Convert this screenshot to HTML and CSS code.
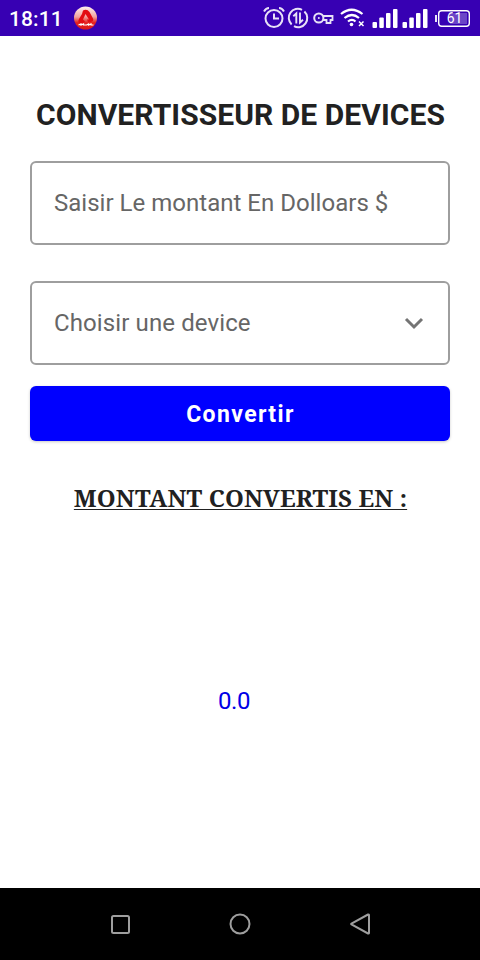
FILE: index.html
```html
<!DOCTYPE html>
<html lang="fr">
<head>
<meta charset="utf-8">
<meta name="viewport" content="width=device-width">
<title>Convertisseur de devices</title>
<link rel="stylesheet" href="styles.css">
</head>
<body>
<header class="status">
  <span class="clock">18:11</span>
  <svg class="app-icon" width="24" height="24" viewBox="0 0 24 24">
    <defs><linearGradient id="badge" x1="0" y1="0" x2="0" y2="1"><stop offset="0" stop-color="#fff0f0"/><stop offset=".45" stop-color="#f2a3a0"/><stop offset=".7" stop-color="#e52320"/><stop offset="1" stop-color="#dd1616"/></linearGradient></defs>
    <circle cx="11.500" cy="12" r="11.500" fill="url(#badge)"/>
    <path d="M9 4.500q4-2 6.500 1.500l3.500 6.500q1 3-2 3.500h-3l-1-2.500h2L11.500 8l-2.500 5.500 2 2-2 1.500H5.500q-2-1-.5-4l3-5z" fill="#e30d13"/>
    <path d="M4.500 19l2.500-1v1l2.500-1v1h3l2-1v1l2.500-1v1h2.500" fill="none" stroke="#fff" stroke-width="1.200"/>
  </svg>
  <svg class="indicators" width="215" height="36" viewBox="0 0 215 36" fill="none" stroke="#e8e1f7" stroke-width="2">
    <circle cx="14" cy="18.500" r="8.500"/>
    <path d="M4 11.500Q6 8 9 8M24 11.500Q22 8 19 8M14 13.500v5h5"/>
    <path d="M42 9.900A9 9 0 0 0 31.600 24.400M34 26.100A9 9 0 0 0 44.400 11.600"/>
    <path d="M36.300 23.500v-10l-3 2.700M40 12.500v10l3-2.700" stroke-width="1.900"/>
    <circle cx="58.800" cy="18" r="4.600"/><circle cx="58.800" cy="18" r="1" fill="#e8e1f7" stroke="none"/>
    <path d="M63 16h9.500v4h-2v3h-4v-3H63" stroke-width="1.800"/>
    <g stroke="#fff" stroke-width="2.200"><path d="M81 14q10.500-8.500 21.500 0M84.500 18q7.500-6 14.500 0M88 21.500q4-3.200 7.500 0"/><path d="M99 21.500l4.500 4.500m0-4.500L99 26" stroke-width="1.500"/></g>
    <circle cx="91.500" cy="24.500" r="1.800" fill="#fff" stroke="none"/>
    <g fill="#fff" stroke="none">
      <rect x="112.500" y="22" width="4.500" height="6" rx="1"/><rect x="119.300" y="17.500" width="4.500" height="10.500" rx="1"/><rect x="126" y="13" width="4.500" height="15" rx="1"/><rect x="133" y="9" width="4.500" height="19" rx="1"/>
      <rect x="142.500" y="22" width="4.500" height="6" rx="1"/><rect x="149.300" y="17.500" width="4.500" height="10.500" rx="1"/><rect x="156" y="13" width="4.500" height="15" rx="1"/><rect x="163" y="9" width="4.500" height="19" rx="1"/>
    </g>
    <rect x="190" y="13" width="17" height="11" fill="#6b45c7" stroke="none"/>
    <rect x="178.700" y="10.700" width="30.600" height="15.600" rx="3" stroke="#fff" stroke-width="1.400"/>
    <path d="M176 15v7" stroke="#fff" stroke-width="1.800"/>
    <text class="battery-level" x="194.500" y="23" text-anchor="middle">61</text>
  </svg>
</header>
<main class="screen">
  <h1 class="title">CONVERTISSEUR DE DEVICES</h1>
  <div class="field"><span class="label-amount">Saisir Le montant En Dolloars $</span></div>
  <div class="field"><span class="label-device">Choisir une device</span>
    <svg width="24" height="24" viewBox="0 0 24 24" fill="none" stroke="#747474" stroke-width="3"><path d="M4 8l8 8 8-8"/></svg>
  </div>
  <button class="convert">Convertir</button>
  <h2 class="subtitle">MONTANT CONVERTIS EN :</h2>
  <output class="result">0.0</output>
</main>
<nav class="nav">
  <svg width="24" height="24" viewBox="0 0 24 24"><rect x="4" y="4" width="17" height="17" rx="1.500"/></svg>
  <svg width="24" height="24" viewBox="0 0 24 24"><circle cx="12" cy="12" r="9.500"/></svg>
  <svg width="24" height="24" viewBox="0 0 24 24"><path d="M3.500 12.500q-.7-.5 0-1L20 2.500q1-.3 1 .7v17.600q0 1-1 .7z"/></svg>
</nav>
</body>
</html>
```
FILE: styles.css
```css
* { box-sizing: border-box; }
body {
  margin: 0;
  height: 960px;
  display: flex;
  flex-direction: column;
  background: #fff;
  font-family: Roboto, sans-serif;
  color: #212121;
  overflow: hidden;
}
.status {
  height: 36px;
  display: flex;
  align-items: center;
  background: #3700b3;
  color: #fff;
}
.clock {
  width: 64.5px;
  margin-left: 9px;
  font-size: 21px;
  font-weight: 500;
  letter-spacing: .1px;
  padding-top: 1px;
}
.indicators {
  width: 215px;
  flex: none;
  margin-left: auto;
  margin-right: 5px;
}
.battery-level {
  fill: #fff;
  stroke: none;
  font-size: 14px;
}
.screen {
  flex: 1;
  display: flex;
  flex-direction: column;
  padding: 0 30px;
}
.title {
  margin: 60px -31px 28px -30px;
  height: 37px;
  text-align: center;
  font-size: 30px;
  line-height: 37px;
  font-weight: 700;
  letter-spacing: .06px;
  white-space: nowrap;
}
.field {
  height: 84px;
  margin-bottom: 36px;
  padding: 0 22px;
  display: flex;
  align-items: center;
  justify-content: space-between;
  border: 2px solid #9e9e9e;
  border-radius: 6px;
  color: #666;
  font-size: 24px;
}
.label-amount { letter-spacing: .02px; }
.label-device { letter-spacing: .11px; }
.convert {
  height: 55px;
  margin-top: -15px;
  padding: 2px 0 0 1px;
  border: 0;
  border-radius: 6px;
  background: #00f;
  color: #fff;
  font: 700 23px Roboto, sans-serif;
  letter-spacing: 1.4px;
  box-shadow: 0 1px 3px rgba(0, 0, 0, .22);
}
.subtitle {
  margin: 41px -1px 0 0;
  height: 32px;
  font: 700 24px/32px "Noto Serif", "Liberation Serif", serif;
  letter-spacing: .14px;
  text-align: center;
  white-space: nowrap;
  text-decoration: underline;
  text-decoration-thickness: 1px;
  text-underline-offset: 2px;
}
.result {
  margin: 172px 0 0 188px;
  font-size: 24px;
  line-height: 30px;
  letter-spacing: -.4px;
  color: #0000e6;
}
.nav {
  height: 72px;
  display: flex;
  align-items: center;
  justify-content: center;
  gap: 96px;
  background: #000;
}
.nav svg {
  fill: none;
  stroke: #9e9e9e;
  stroke-width: 2;
}
```
